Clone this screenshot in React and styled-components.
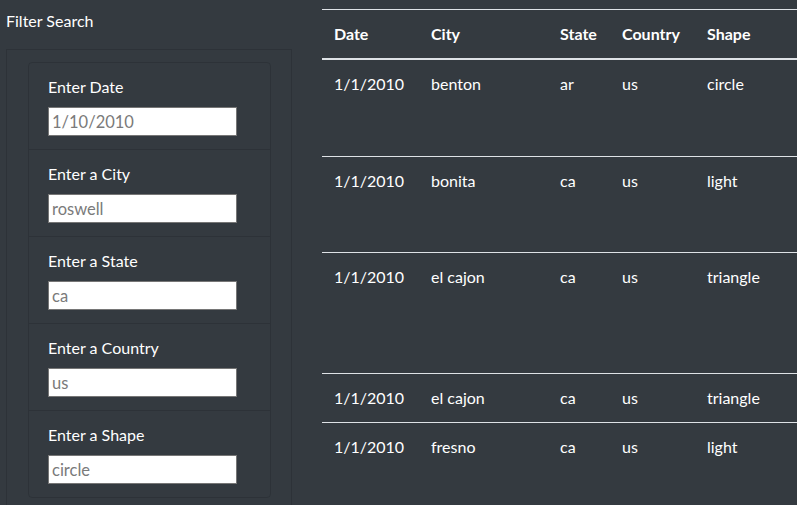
import React from 'react'
import styled, { createGlobalStyle } from "styled-components";

const GlobalStyle = createGlobalStyle`
  body {
    margin: 0;
    background: #343a40;
    color: #ffffff;
    font-family: Lato, "Open Sans", sans-serif;
    font-size: 16px;
    line-height: 1.5;
  }
`;

const filters = [
  { label: "Enter Date", placeholder: "1/10/2010" },
  { label: "Enter a City", placeholder: "roswell" },
  { label: "Enter a State", placeholder: "ca" },
  { label: "Enter a Country", placeholder: "us" },
  { label: "Enter a Shape", placeholder: "circle" },
];

const sightings = [
  { date: "1/1/2010", city: "benton", state: "ar", country: "us", shape: "circle", height: 97 },
  { date: "1/1/2010", city: "bonita", state: "ca", country: "us", shape: "light", height: 96 },
  { date: "1/1/2010", city: "el cajon", state: "ca", country: "us", shape: "triangle", height: 121 },
  { date: "1/1/2010", city: "el cajon", state: "ca", country: "us", shape: "triangle", height: 49 },
  { date: "1/1/2010", city: "fresno", state: "ca", country: "us", shape: "light", height: 73 },
];

const App = () => {
  return (
    <Page>
      <GlobalStyle />
      <Sidebar>
        <Heading>Filter Search</Heading>
        <Panel>
          <FilterList>
            {filters.map((f) => (
              <FilterItem key={f.label}>
                <label>{f.label}</label>
                <input type="text" placeholder={f.placeholder} />
              </FilterItem>
            ))}
          </FilterList>
        </Panel>
      </Sidebar>

      {/* sightings table, wider than the window */}
      <Table>
        <thead>
          <tr>
            <Th $w={97}>Date</Th>
            <Th $w={129}>City</Th>
            <Th $w={62}>State</Th>
            <Th $w={85}>Country</Th>
            <Th $w={187}>Shape</Th>
          </tr>
        </thead>
        <tbody>
          {sightings.map((s, i) => (
            <Row key={i} $h={s.height}>
              <td>{s.date}</td>
              <td>{s.city}</td>
              <td>{s.state}</td>
              <td>{s.country}</td>
              <td>{s.shape}</td>
            </Row>
          ))}
        </tbody>
      </Table>
    </Page>
  );
}

const Page = styled.div`
  display: flex;
  align-items: flex-start;
  gap: 30px;
  padding: 9px 0 0 6px;
  height: 496px;
  overflow: hidden;
`;

const Sidebar = styled.div`
  width: 286px;
  flex-shrink: 0;
`;

const Heading = styled.div`
  margin-bottom: 16px;
`;

const Panel = styled.div`
  border: 1px solid rgba(0, 0, 0, 0.125);
  height: 500px;
  padding: 12px 20px 0 21px;
`;

const FilterList = styled.ul`
  list-style: none;
  margin: 0;
  padding: 0;
  width: 243px;
  box-sizing: border-box;
  border: 1px solid rgba(0, 0, 0, 0.125);
  border-radius: 4px;
`;

const FilterItem = styled.li`
  padding: 12px 19px;
  height: 86px;
  box-sizing: border-box;
  & + & {
    border-top: 1px solid rgba(0, 0, 0, 0.125);
    height: 87px;
  }
  label {
    display: block;
    margin-bottom: 8px;
  }
  input {
    display: block;
    box-sizing: border-box;
    width: 189px;
    height: 29px;
    margin: 0;
    padding: 1px 3px;
    border: 1px solid #767676;
    background: #ffffff;
    font-family: inherit;
    font-size: 16.5px;
    color: #495057;
  }
  input::placeholder {
    color: #7a7a7a;
  }
`;

const Table = styled.table`
  flex-shrink: 0;
  width: 560px;
  border-collapse: collapse;
  border-top: 1px solid #dee2e6;
  table-layout: fixed;
  td {
    padding: 12px;
    vertical-align: top;
    border-top: 1px solid #dee2e6;
    text-align: left;
    white-space: nowrap;
  }
`;

const Th = styled.th`
  box-sizing: border-box;
  width: ${(p) => p.$w}px;
  padding: 12px;
  text-align: left;
  font-weight: 700;
  border-bottom: 2px solid #dee2e6;
`;

const Row = styled.tr`
  height: ${(p) => p.$h}px;
`;

export default App
